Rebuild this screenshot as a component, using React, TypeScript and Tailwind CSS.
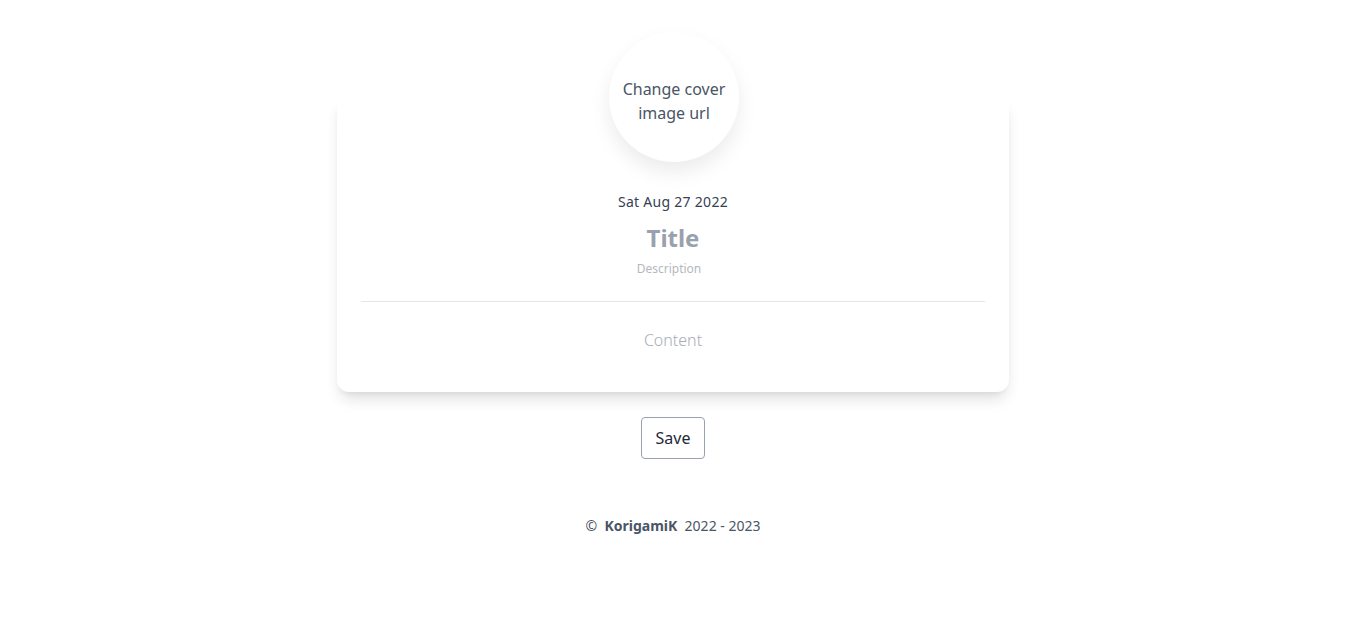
import { useState } from "react";

export default function App() {
  const [title, setTitle] = useState("");
  const [description, setDescription] = useState("");
  const [content, setContent] = useState("");

  return (
    <div className="min-h-screen bg-white flex flex-col items-center pt-8 text-gray-700" style={{ fontFamily: '"Noto Sans", sans-serif' }}>
      <button className="relative z-10 ml-[2px] w-[130px] h-[130px] rounded-full bg-white shadow-[0_10px_20px_rgba(0,0,0,0.08)] text-base leading-6 text-gray-600 px-3 pt-2">
        Change cover image url
      </button>

      <div className="w-[672px] -mt-[66px] pt-[96px] pb-[40px] px-6 bg-white rounded-xl shadow-[0_10px_15px_-3px_rgba(0,0,0,0.12),0_4px_6px_-4px_rgba(0,0,0,0.1)] flex flex-col items-center">
        <div className="text-sm leading-5 tracking-[0.02em] text-gray-700">Sat Aug 27 2022</div>
        <input
          value={title}
          onChange={(e) => setTitle(e.target.value)}
          placeholder="Title"
          className="mt-[10px] w-full text-center text-2xl leading-8 font-bold outline-none placeholder:text-gray-400"
        />
        <input
          value={description}
          onChange={(e) => setDescription(e.target.value)}
          placeholder="Description"
          className="mt-[7px] w-full pr-2 text-center text-xs leading-4 outline-none placeholder:text-[#b4b8be]"
        />
        <div className="mt-[24px] w-full border-t border-gray-200" />
        <textarea
          value={content}
          onChange={(e) => setContent(e.target.value)}
          placeholder="Content"
          rows={1}
          className="mt-[26px] w-full text-center text-base leading-6 resize-none outline-none placeholder:text-[#a9adb4] font-light"
        />
      </div>

      <button className="mt-[25px] px-[14px] py-2 border border-gray-400 rounded text-base leading-6 text-gray-800">
        Save
      </button>

      <footer className="mt-[57px] text-sm leading-5 text-gray-600 whitespace-pre">
        {"©  "}
        <span className="font-bold">KorigamiK</span>
        {"  2022 - 2023"}
      </footer>
    </div>
  );
}
